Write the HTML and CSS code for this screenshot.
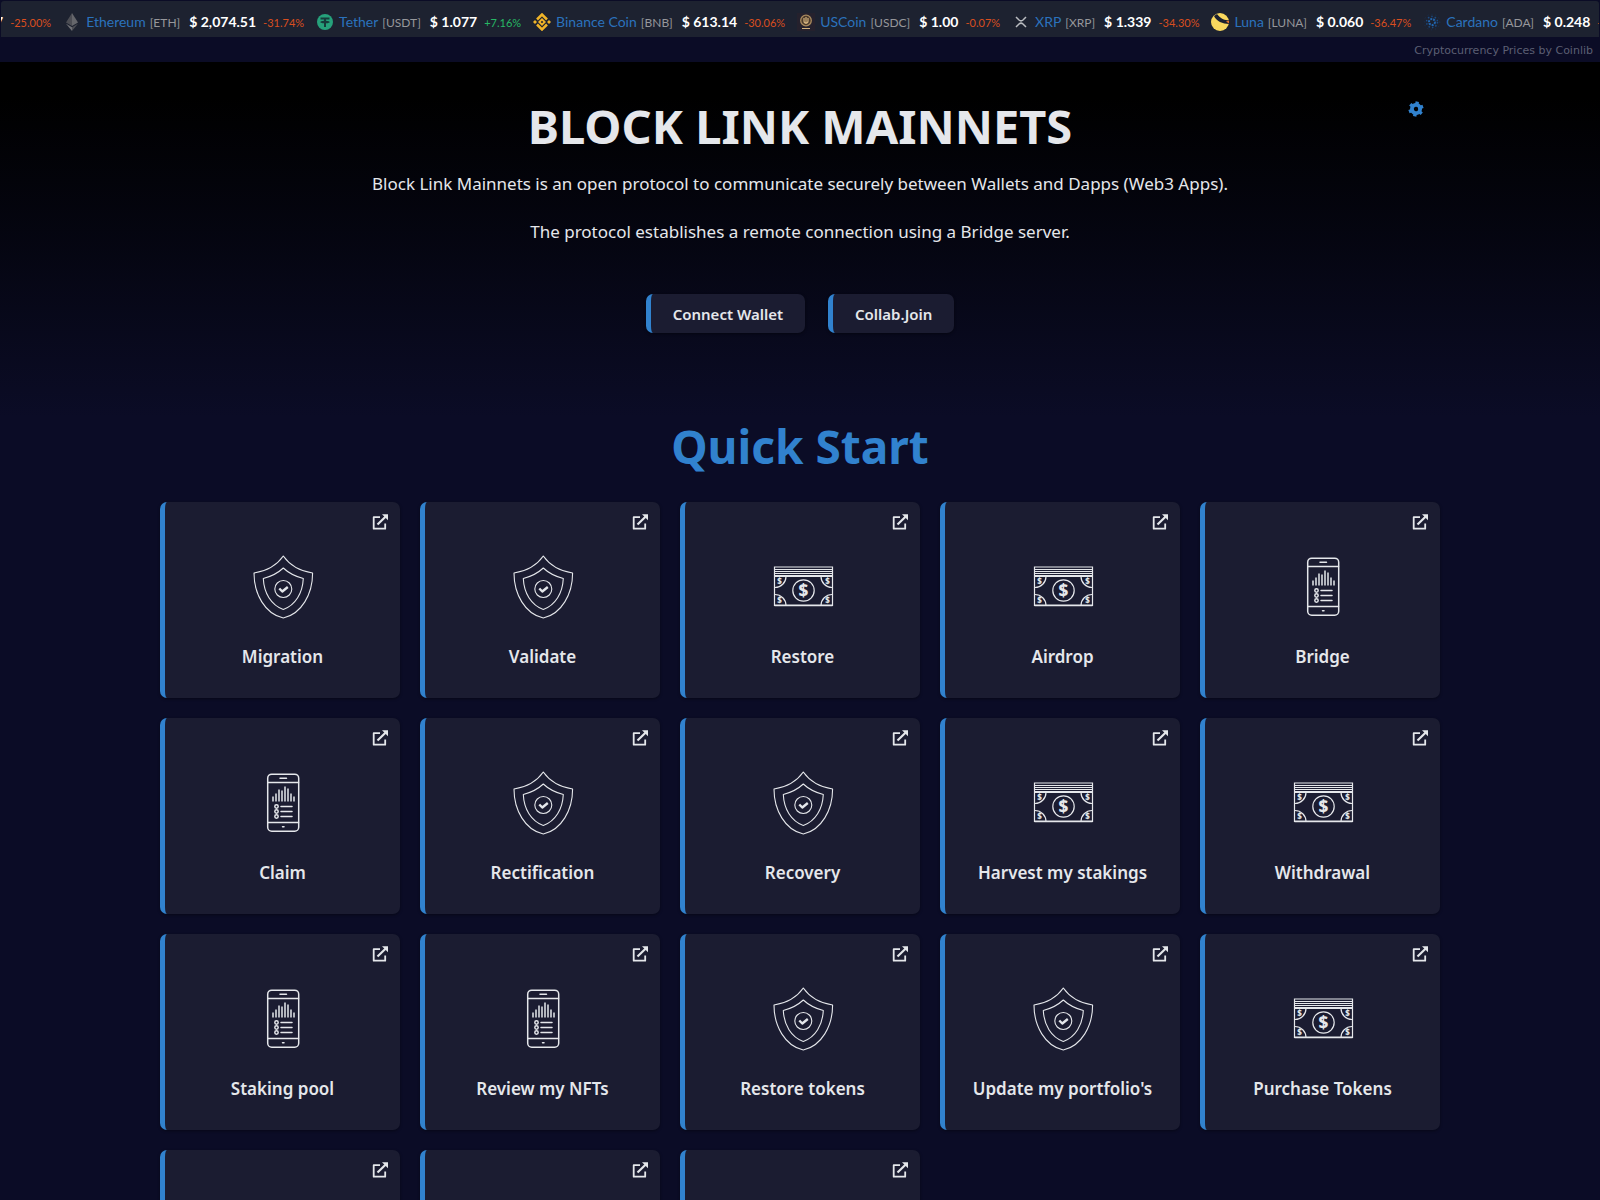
FILE: index.html
```html
<!DOCTYPE html>
<html lang="en">
<head>
    <meta charset="UTF-8">
    <meta name="viewport" content="width=device-width, initial-scale=1.0">
    <title>Block Link Mainnets</title>
    <link rel="stylesheet" href="styles.css">
</head>
<body>

    <!-- shared icons -->
    <svg class="sprite" aria-hidden="true">
        <symbol id="shield" viewBox="0 0 64 64">
            <g fill="none" stroke="currentColor" stroke-width="1.1" stroke-linejoin="round">
                <path d="M32.300 1C26 10 16 16 3 18C3 39 14 59 32.300 63C50.600 59 61.600 39 61.600 18C48.600 16 38.600 10 32.300 1Z"/>
                <path d="M32.300 13C27 18 20 21.500 12.300 23.500C13 38 20 50 32.300 54.500C44.600 50 51.600 38 52.300 23.500C44.600 21.500 37.600 18 32.300 13Z"/>
                <circle cx="32.300" cy="34" r="8.500"/>
                <path d="M28.300 33.500l3 3 5.500-4.500" stroke-width="2.400"/>
            </g>
        </symbol>
        <symbol id="money" viewBox="0 0 64 64">
            <g fill="none" stroke="currentColor" stroke-width="1.200">
                <path d="M3.500 12h58v38.500h-58z"/>
                <path d="M3.500 14.500h58M3.500 16.500h58M3.500 18.500h58"/>
                <path d="M3.500 21h58M3.500 50.300h58" stroke-width="1.800"/>
                <path d="M15 21.500A11 11 0 0 1 4 32.500M50 21.500A11 11 0 0 0 61 32.500M15 50.500A11 11 0 0 0 4 39.500M50 50.500A11 11 0 0 1 61 39.500"/>
                <circle cx="32.500" cy="35.500" r="10.700"/>
            </g>
            <g fill="currentColor" font-family="Noto Sans" font-weight="800" text-anchor="middle">
                <text x="32.500" y="41.500" font-size="17">$</text>
                <text x="8.500" y="28.500" font-size="8">$</text>
                <text x="56.500" y="28.500" font-size="8">$</text>
                <text x="8.500" y="48" font-size="8">$</text>
                <text x="56.500" y="48" font-size="8">$</text>
            </g>
        </symbol>
        <symbol id="phone" viewBox="0 0 64 64">
            <g fill="none" stroke="currentColor" stroke-width="1.500" stroke-linecap="round">
                <rect x="16.700" y="3.200" width="31" height="57" rx="4"/>
                <path d="M17 11.500h30.500M17 51.500h30.500M29 7.200h6.500M31.500 55.700h1.500"/>
                <path d="M30 35.500h11M30 40.500h11M30 45.500h11"/>
                <circle cx="25.500" cy="35.500" r="1.700"/>
                <circle cx="25.500" cy="40.500" r="1.700"/>
                <circle cx="25.500" cy="45.500" r="1.700"/>
                <path stroke-linecap="butt" d="M22 30.500v-5M25 30.500v-8M28 30.500v-12M31 30.500v-11M34 30.500v-15M37 30.500v-13M40 30.500v-8M43 30.500v-5"/>
            </g>
        </symbol>
        <symbol id="external" viewBox="0 0 16 16">
            <path fill="none" stroke="currentColor" stroke-width="1.800" stroke-linejoin="round" d="M8 3.200H1.700v11.500H13.200V9.500"/>
            <path fill="none" stroke="currentColor" stroke-width="2.200" d="M5.500 10.500L13.500 2.700"/>
            <path fill="currentColor" d="M10 .3h6v6z"/>
        </symbol>
    </svg>

    <div class="ticker">
        <div class="coin"><b class="price">7</b><span class="change down">-25.00%</span></div>
        <div class="coin">
            <svg class="logo" viewBox="0 0 18 18"><path fill="#65666b" d="M9 0l6 9.500L9 13z"/><path fill="#4c4d54" d="M9 0L3 9.500 9 13zM9 14.200l6-3.500L9 18z"/><path fill="#707176" d="M9 14.200l-6-3.500L9 18z"/></svg>
            <a href="#">Ethereum</a><span class="symbol">[ETH]</span><b class="price">$ 2,074.51</b><span class="change down">-31.74%</span>
        </div>
        <div class="coin">
            <svg class="logo" viewBox="0 0 18 18"><circle cx="9" cy="9" r="8" fill="#26a17b"/><path fill="#173b3b" d="M4.500 4.500h9V6.500h-3.500v1.200c5 .3 5 2.300 0 2.600V14h-2v-3.700C3 10 3 8 8 7.700V6.500H4.500z"/></svg>
            <a href="#">Tether</a><span class="symbol">[USDT]</span><b class="price">$ 1.077</b><span class="change up">+7.16%</span>
        </div>
        <div class="coin">
            <svg class="logo" viewBox="0 0 18 18"><path fill="none" stroke="#f0b428" stroke-width="2.500" d="M4 6.500l5-5 5 5M4 11.500l5 5 5-5"/><path fill="#f0b428" d="M0 9l2-2 2 2-2 2zM14 9l2-2 2 2-2 2zM9 5l4 4-4 4-4-4zM9 7.700L7.700 9 9 10.300 10.300 9z" fill-rule="evenodd"/></svg>
            <a href="#">Binance Coin</a><span class="symbol">[BNB]</span><b class="price">$ 613.14</b><span class="change down">-30.06%</span>
        </div>
        <div class="coin">
            <svg class="logo" viewBox="0 0 18 18"><path fill="#25212d" d="M0 0h18v18H0z"/><circle cx="9" cy="7.500" r="5.300" fill="#4d3b2c" stroke="#a98a5e" stroke-width="1.300"/><path fill="none" stroke="#d3b27e" stroke-width="1.200" d="M7 5v3a2 2 0 0 0 4 0V5M9 4v7M5 15.500h8"/></svg>
            <a href="#">USCoin</a><span class="symbol">[USDC]</span><b class="price">$ 1.00</b><span class="change down">-0.07%</span>
        </div>
        <div class="coin">
            <svg class="logo" viewBox="0 0 18 18"><path fill="none" stroke="#b9bcc0" stroke-width="1.500" d="M4 4l3 3q2 1.700 4 0l3-3M4 14l3-3q2-1.700 4 0l3 3"/></svg>
            <a href="#">XRP</a><span class="symbol">[XRP]</span><b class="price">$ 1.339</b><span class="change down">-34.30%</span>
        </div>
        <div class="coin">
            <svg class="logo" viewBox="0 0 18 18"><circle cx="9" cy="9" r="9" fill="#f9d85e"/><path fill="#1c2130" d="M3 3C5 8 12 11 18 11V7C14 8 9 5 6 1z"/><path fill="#e8722a" d="M15 8.500l3-1v3z"/></svg>
            <a href="#">Luna</a><span class="symbol">[LUNA]</span><b class="price">$ 0.060</b><span class="change down">-36.47%</span>
        </div>
        <div class="coin">
            <svg class="logo" viewBox="0 0 18 18"><g fill="none" stroke="#2165ae"><circle cx="9" cy="9" r="3" stroke-width="2" stroke-dasharray="2 1"/><circle cx="9" cy="9" r="5.500" stroke="#1b4a82" stroke-width="1.500" stroke-dasharray="1.500 2"/><circle cx="9" cy="9" r="7.800" stroke="#1c3658" stroke-dasharray="1 3"/></g></svg>
            <a href="#">Cardano</a><span class="symbol">[ADA]</span><b class="price">$ 0.248</b><span class="change down">-</span>
        </div>
    </div>
    <div class="credit"><a href="#">Cryptocurrency Prices by Coinlib</a></div>

    <header class="hero">
        <div class="container hero-top">
            <h1>BLOCK LINK MAINNETS</h1>
            <button class="settings" aria-label="Settings">
                <svg viewBox="0 0 16 16"><g fill="none" stroke="currentColor" transform="rotate(10 8 8)"><circle cx="8" cy="8" r="4.100" stroke-width="3.800"/><path stroke-width="3.400" d="M8 .5v3M8 12.500v3M1.500 4.250l2.600 1.500M11.900 10.250l2.600 1.500M1.500 11.750l2.600-1.500M11.900 5.750l2.600-1.500"/></g></svg>
            </button>
        </div>
        <p>Block Link Mainnets is an open protocol to communicate securely between Wallets and Dapps (Web3 Apps).</p>
        <p>The protocol establishes a remote connection using a Bridge server.</p>
        <div class="actions">
            <button class="btn">Connect Wallet</button>
            <button class="btn">Collab.Join</button>
        </div>
    </header>

    <main class="container">
        <h2>Quick Start</h2>
        <div class="cards">
            <a class="card" href="#"><svg class="open"><use href="#external"/></svg><svg class="icon"><use href="#shield"/></svg><span>Migration</span></a>
            <a class="card" href="#"><svg class="open"><use href="#external"/></svg><svg class="icon"><use href="#shield"/></svg><span>Validate</span></a>
            <a class="card" href="#"><svg class="open"><use href="#external"/></svg><svg class="icon"><use href="#money"/></svg><span>Restore</span></a>
            <a class="card" href="#"><svg class="open"><use href="#external"/></svg><svg class="icon"><use href="#money"/></svg><span>Airdrop</span></a>
            <a class="card" href="#"><svg class="open"><use href="#external"/></svg><svg class="icon"><use href="#phone"/></svg><span>Bridge</span></a>

            <a class="card" href="#"><svg class="open"><use href="#external"/></svg><svg class="icon"><use href="#phone"/></svg><span>Claim</span></a>
            <a class="card" href="#"><svg class="open"><use href="#external"/></svg><svg class="icon"><use href="#shield"/></svg><span>Rectification</span></a>
            <a class="card" href="#"><svg class="open"><use href="#external"/></svg><svg class="icon"><use href="#shield"/></svg><span>Recovery</span></a>
            <a class="card" href="#"><svg class="open"><use href="#external"/></svg><svg class="icon"><use href="#money"/></svg><span>Harvest my stakings</span></a>
            <a class="card" href="#"><svg class="open"><use href="#external"/></svg><svg class="icon"><use href="#money"/></svg><span>Withdrawal</span></a>

            <a class="card" href="#"><svg class="open"><use href="#external"/></svg><svg class="icon"><use href="#phone"/></svg><span>Staking pool</span></a>
            <a class="card" href="#"><svg class="open"><use href="#external"/></svg><svg class="icon"><use href="#phone"/></svg><span>Review my NFTs</span></a>
            <a class="card" href="#"><svg class="open"><use href="#external"/></svg><svg class="icon"><use href="#shield"/></svg><span>Restore tokens</span></a>
            <a class="card" href="#"><svg class="open"><use href="#external"/></svg><svg class="icon"><use href="#shield"/></svg><span>Update my portfolio's</span></a>
            <a class="card" href="#"><svg class="open"><use href="#external"/></svg><svg class="icon"><use href="#money"/></svg><span>Purchase Tokens</span></a>

            <a class="card" href="#" aria-label="Open"><svg class="open"><use href="#external"/></svg></a>
            <a class="card" href="#" aria-label="Open"><svg class="open"><use href="#external"/></svg></a>
            <a class="card" href="#" aria-label="Open"><svg class="open"><use href="#external"/></svg></a>
        </div>
    </main>

</body>
</html>
```
FILE: styles.css
```css
* {
    box-sizing: border-box;
}
body {
    margin: 0;
    background-color: #0b0c26;
    color: #e5e7eb;
    font-family: "Noto Sans", sans-serif;
    font-size: 17px;
}
a {
    color: inherit;
    text-decoration: none;
}
button {
    font-family: inherit;
    color: inherit;
    cursor: pointer;
}
.sprite {
    display: none;
}
.container {
    max-width: 1280px;
    margin: 0 auto;
}

/* price ticker */
.ticker {
    display: flex;
    align-items: center;
    gap: 12px;
    height: 36px;
    margin: 1px 1px 0;
    padding-top: 6px;
    border-radius: 3px 3px 0 0;
    background-color: #1d2230;
    font-family: Lato, sans-serif;
    font-size: 14px;
    line-height: 20px;
    white-space: nowrap;
    overflow: hidden;
}
.coin {
    display: flex;
    flex-shrink: 0;
    align-items: baseline;
}
.coin:first-child {
    margin-left: -6px;
}
.coin a {
    color: #2b72bd;
}
.logo {
    width: 18px;
    height: 18px;
    margin-right: 5px;
    align-self: center;
}
.symbol {
    margin-left: 4px;
    color: #96979b;
    font-size: 12px;
}
.price {
    margin-left: 9px;
    color: #fff;
}
.coin:first-child .price {
    margin-left: 0;
}
.change {
    margin-left: 7px;
    font-size: 11px;
}
.down {
    color: #d94e1f;
}
.up {
    color: #27b865;
}
.credit {
    height: 25px;
    padding-right: 7px;
    color: #5b5f73;
    font-family: "DejaVu Sans", sans-serif;
    font-size: 11px;
    line-height: 27px;
    text-align: right;
}

/* hero */
.hero {
    padding: 35px 0 84px;
    background-image: linear-gradient(#000 10%, #0b0c26);
    text-align: center;
}
.hero-top {
    display: grid;
    grid-template-columns: 1fr auto 1fr;
    align-items: start;
}
h1, h2 {
    margin: 0;
    line-height: 58px;
}
h1 {
    grid-column: 2;
    font-size: 47px;
}
.settings {
    justify-self: end;
    margin: 4px 16px 0;
    padding: 0;
    border: 0;
    background: none;
    color: #3182ce;
}
.settings svg {
    display: block;
    width: 16px;
    height: 16px;
}
.hero p {
    margin: 15px 0 21px;
    line-height: 27px;
}
.actions {
    display: flex;
    justify-content: center;
    gap: 23px;
    margin-top: 49px;
}
.btn, .card {
    border: 0;
    border-left: 5px solid #3182ce;
    border-radius: 7px;
    background-color: #1b1c31;
    box-shadow: 0 1px 3px rgba(0, 0, 0, 0.4);
}
.btn {
    height: 39px;
    padding: 0 22px;
    font-size: 15px;
    font-weight: 600;
}

/* quick start */
h2 {
    margin-bottom: 27px;
    color: #3182ce;
    font-size: 46px;
    text-align: center;
}
.cards {
    display: grid;
    grid-template-columns: repeat(5, 1fr);
    gap: 20px;
}
.card {
    position: relative;
    display: flex;
    flex-direction: column;
    align-items: center;
    gap: 24px;
    min-height: 196px;
    padding: 53px 12px 28px;
    font-weight: 600;
    line-height: 27px;
}
.icon {
    width: 64px;
    height: 64px;
}
.open {
    position: absolute;
    top: 12px;
    right: 12px;
    width: 16px;
    height: 16px;
}
```
